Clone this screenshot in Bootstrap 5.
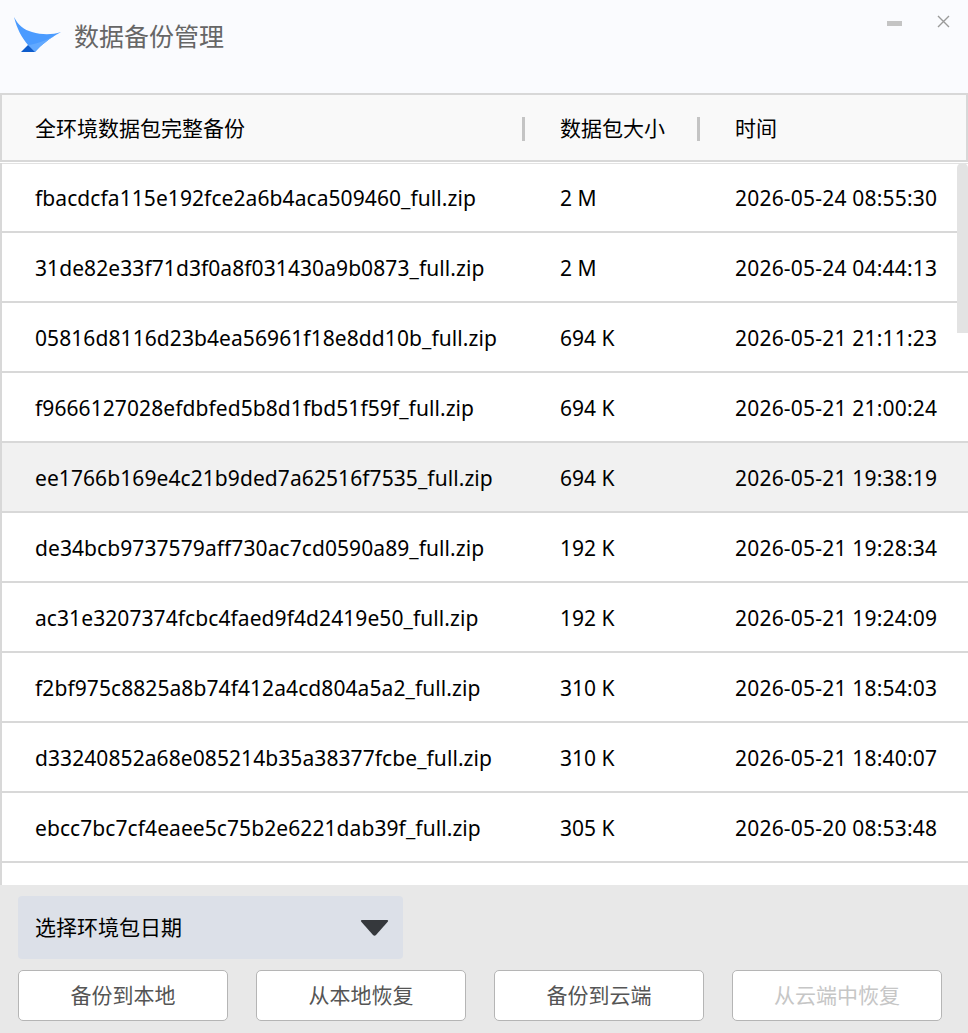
<!DOCTYPE html>
<html lang="zh-CN">
<head>
    <meta charset="UTF-8">
    <title>数据备份管理</title>
    <link rel="stylesheet" href="https://cdn.jsdelivr.net/npm/bootstrap@5.3.0/dist/css/bootstrap.min.css">
    <style>
        html, body { height: 100%; overflow: hidden; }
        body { font-family: "Noto Sans", "Noto Sans CJK SC", sans-serif; font-size: 21px; color: #000; background: #fff; }
        .app { height: 1033px; width: 968px; }
        .title-bar { height: 93px; background: #fafbfe; padding: 0 0 22px 14px; }
        .title-bar h1 { font-size: 25px; font-weight: 400; color: #666; margin: 0 0 0 12px; }
        .win-min { position: absolute; left: 887px; top: 21px; width: 15px; height: 5px; background: #c4c4c4; }
        .win-close { position: absolute; left: 936px; top: 14px; }
        .list-head { height: 69px; background: #f9f9f9; border: 2px solid #d8d8d8; padding-top: 2px; margin-bottom: 1px; }
        .list-head .col-name, .list-head .col-size { height: 24px; border-right: 3px solid #c4c4c4; display: flex; align-items: center; }
        .list-head .col-name { width: 523px; padding-left: 33px; }
        .list-head .col-size { width: 175px; padding-left: 35px; }
        .list-head .col-time { padding-left: 35px; }
        .list-wrap { height: 722px; border-left: 2px solid #d8d8d8; overflow: hidden; position: relative; }
        .file-row { height: 70px; padding-top: 4px; border-bottom: 2px solid #d8d8d8; background: #fff; }
        .file-row:first-child { padding-top: 3px; border-top: 1px solid #e2e2e2; }
        .file-row.hovered { background: #f1f1f1; }
        .file-row .col-name { width: 524px; padding-left: 33px; letter-spacing: .08px; }
        .file-row .col-size { width: 175px; padding-left: 34px; }
        .file-row .col-time { padding-left: 34px; letter-spacing: .2px; }
        .scroll-thumb { position: absolute; right: 0; top: 0; width: 11px; height: 170px; background: #e3e3e3; border-radius: 5px 5px 0 0; }
        .bottom-panel { height: 148px; background: #e8e8e8; padding: 11px 26px 0 18px; }
        .date-select { width: 385px; height: 63px; background: #dce0e8; border-radius: 4px; padding: 0 14px 0 17px; }
        .action-btn { width: 210px; height: 51px; background: #fff; border: 1px solid #b5b5b5; border-radius: 5px; font-size: 21px; color: #555; padding: 0; }
        .action-btn:disabled { background: #fff; border-color: #b5b5b5; color: #c6c6c6; opacity: 1; }
        .btn-row { gap: 28px; margin-top: 11px; }
    </style>
</head>
<body>
    <div class="app d-flex flex-column position-relative">
        <div class="title-bar d-flex align-items-center">
            <svg width="48" height="37" viewBox="0 0 48 37">
                <path d="M0 0 C4 8 10 13 18 15 C28 18 38 18 47 15 C36 21 27 28 21 35 L14 28 C8 21 3 12 0 0 Z" fill="#4b9bff"/>
                <path d="M47 15 C36 21 27 28 21 35 L14 28 C24 27 36 22 47 15 Z" fill="#62a9ff"/>
                <path d="M7 35 L14 28 L21 35 Z" fill="#0e5ccc"/>
            </svg>
            <h1>数据备份管理</h1>
        </div>
        <div class="win-min"></div>
        <svg class="win-close" width="15" height="15" viewBox="0 0 15 15">
            <path d="M2 2 L13 13 M13 2 L2 13" stroke="#9a9a9a" stroke-width="1.4" fill="none"/>
        </svg>

        <div class="list-head d-flex align-items-center">
            <div class="col-name">全环境数据包完整备份</div>
            <div class="col-size">数据包大小</div>
            <div class="col-time">时间</div>
        </div>

        <div class="list-wrap">
            <div class="file-row d-flex align-items-center">
                <div class="col-name">fbacdcfa115e192fce2a6b4aca509460_full.zip</div>
                <div class="col-size">2 M</div>
                <div class="col-time">2026-05-24 08:55:30</div>
            </div>
            <div class="file-row d-flex align-items-center">
                <div class="col-name">31de82e33f71d3f0a8f031430a9b0873_full.zip</div>
                <div class="col-size">2 M</div>
                <div class="col-time">2026-05-24 04:44:13</div>
            </div>
            <div class="file-row d-flex align-items-center">
                <div class="col-name">05816d8116d23b4ea56961f18e8dd10b_full.zip</div>
                <div class="col-size">694 K</div>
                <div class="col-time">2026-05-21 21:11:23</div>
            </div>
            <div class="file-row d-flex align-items-center">
                <div class="col-name">f9666127028efdbfed5b8d1fbd51f59f_full.zip</div>
                <div class="col-size">694 K</div>
                <div class="col-time">2026-05-21 21:00:24</div>
            </div>
            <div class="file-row hovered d-flex align-items-center">
                <div class="col-name">ee1766b169e4c21b9ded7a62516f7535_full.zip</div>
                <div class="col-size">694 K</div>
                <div class="col-time">2026-05-21 19:38:19</div>
            </div>
            <div class="file-row d-flex align-items-center">
                <div class="col-name">de34bcb9737579aff730ac7cd0590a89_full.zip</div>
                <div class="col-size">192 K</div>
                <div class="col-time">2026-05-21 19:28:34</div>
            </div>
            <div class="file-row d-flex align-items-center">
                <div class="col-name">ac31e3207374fcbc4faed9f4d2419e50_full.zip</div>
                <div class="col-size">192 K</div>
                <div class="col-time">2026-05-21 19:24:09</div>
            </div>
            <div class="file-row d-flex align-items-center">
                <div class="col-name">f2bf975c8825a8b74f412a4cd804a5a2_full.zip</div>
                <div class="col-size">310 K</div>
                <div class="col-time">2026-05-21 18:54:03</div>
            </div>
            <div class="file-row d-flex align-items-center">
                <div class="col-name">d33240852a68e085214b35a38377fcbe_full.zip</div>
                <div class="col-size">310 K</div>
                <div class="col-time">2026-05-21 18:40:07</div>
            </div>
            <div class="file-row d-flex align-items-center">
                <div class="col-name">ebcc7bc7cf4eaee5c75b2e6221dab39f_full.zip</div>
                <div class="col-size">305 K</div>
                <div class="col-time">2026-05-20 08:53:48</div>
            </div>
            <div class="file-row"></div>
            <div class="scroll-thumb"></div>
        </div>

        <div class="bottom-panel">
            <div class="date-select d-flex align-items-center justify-content-between">
                <span>选择环境包日期</span>
                <svg width="29" height="18" viewBox="0 0 29 18">
                    <path d="M2 1 H27 Q29 1 27.500 3 L16 16 Q14.500 17.500 13 16 L1.500 3 Q0 1 2 1 Z" fill="#35383c"/>
                </svg>
            </div>
            <div class="btn-row d-flex">
                <button type="button" class="btn action-btn">备份到本地</button>
                <button type="button" class="btn action-btn">从本地恢复</button>
                <button type="button" class="btn action-btn">备份到云端</button>
                <button type="button" class="btn action-btn" disabled>从云端中恢复</button>
            </div>
        </div>
    </div>
    <script src="https://cdn.jsdelivr.net/npm/bootstrap@5.3.0/dist/js/bootstrap.bundle.min.js"></script>
</body>
</html>
